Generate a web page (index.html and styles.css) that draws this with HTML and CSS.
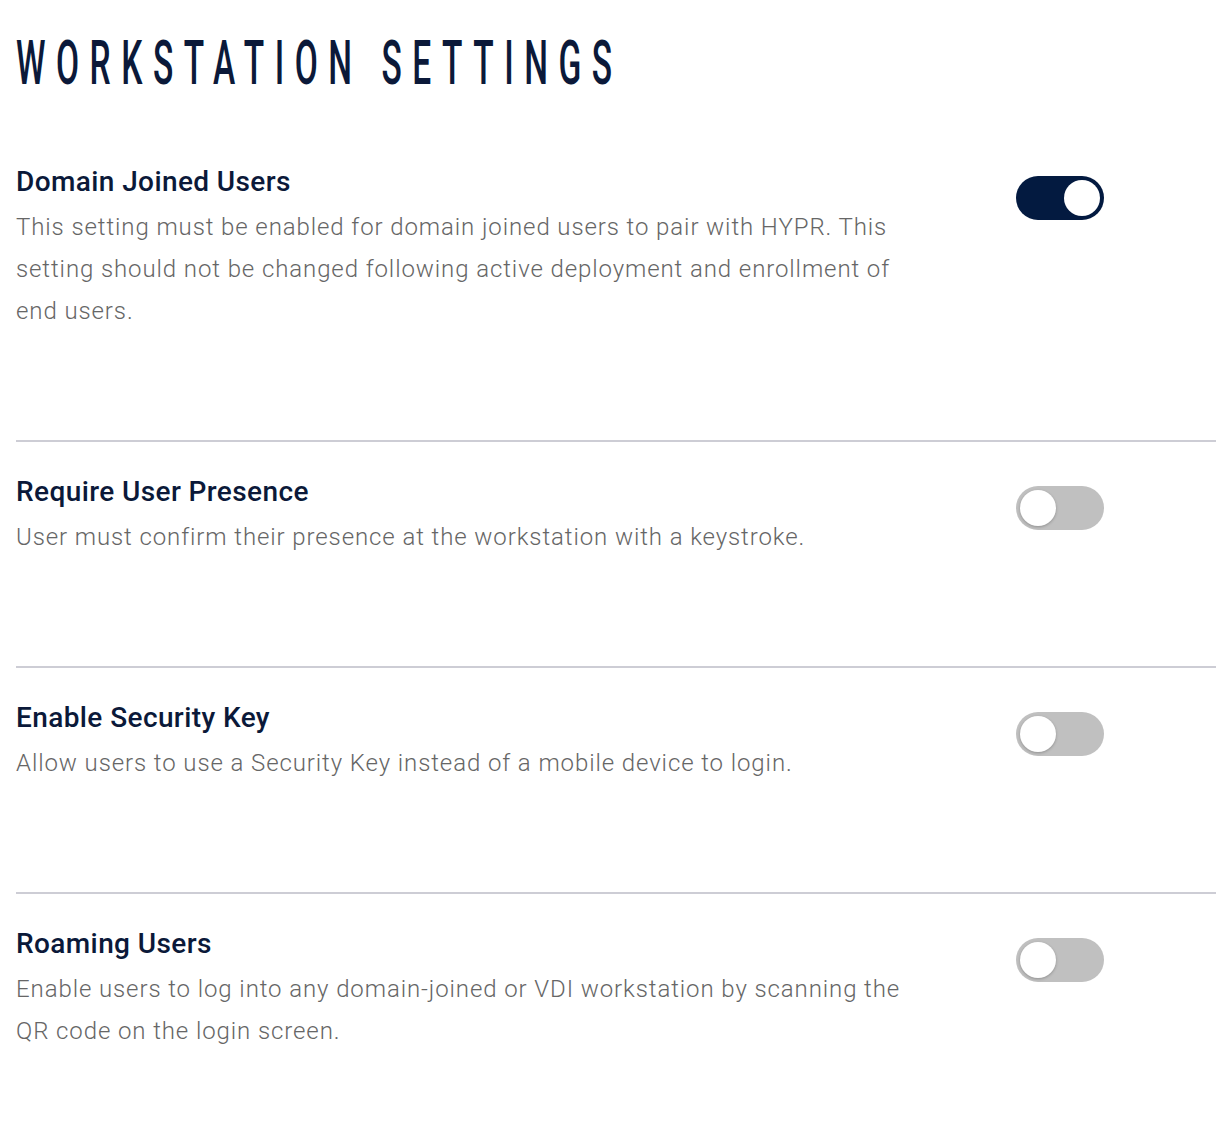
FILE: index.html
```html
<!DOCTYPE html>
<html lang="en">
<head>
<meta charset="utf-8">
<title>Workstation Settings</title>
<link rel="stylesheet" href="styles.css">
</head>
<body>
<main class="page">
  <h1 class="page-title">WORKSTATION SETTINGS</h1>

  <section class="setting">
    <div class="setting-text">
      <h2 class="setting-title">Domain Joined Users</h2>
      <p class="setting-desc">This setting must be enabled for domain joined users to pair with HYPR. This setting should not be changed following active deployment and enrollment of end users.</p>
    </div>
    <div class="toggle is-on" role="switch" aria-checked="true"><span class="knob"></span></div>
  </section>

  <section class="setting">
    <div class="setting-text">
      <h2 class="setting-title">Require User Presence</h2>
      <p class="setting-desc">User must confirm their presence at the workstation with a keystroke.</p>
    </div>
    <div class="toggle" role="switch" aria-checked="false"><span class="knob"></span></div>
  </section>

  <section class="setting">
    <div class="setting-text">
      <h2 class="setting-title">Enable Security Key</h2>
      <p class="setting-desc">Allow users to use a Security Key instead of a mobile device to login.</p>
    </div>
    <div class="toggle" role="switch" aria-checked="false"><span class="knob"></span></div>
  </section>

  <section class="setting">
    <div class="setting-text">
      <h2 class="setting-title">Roaming Users</h2>
      <p class="setting-desc">Enable users to log into any domain-joined or VDI workstation by scanning the QR code on the login screen.</p>
    </div>
    <div class="toggle" role="switch" aria-checked="false"><span class="knob"></span></div>
  </section>
</main>
</body>
</html>
```

FILE: styles.css
```css
html, body {
  margin: 0;
  padding: 0;
  background: #ffffff;
}

.page {
  padding: 0 16px;
  font-family: Roboto, "Noto Sans", sans-serif;
}

.page-title {
  margin: 27px 0 33px;
  height: 72px;
  font-family: Roboto, "Noto Sans", sans-serif;
  font-weight: 500;
  font-size: 62px;
  line-height: 72px;
  letter-spacing: 19.5px;
  color: #0b1939;
  white-space: nowrap;
  transform: scaleX(0.54);
  transform-origin: left center;
}

.setting {
  display: flex;
  align-items: flex-start;
  padding: 32px 0 108px;
  border-bottom: 2px solid #cdcdd5;
}

.setting:last-child {
  border-bottom: none;
}

.setting-text {
  width: 910px;
  flex: none;
}

.setting-title {
  margin: 0;
  font-size: 28px;
  line-height: 36px;
  font-weight: 500;
  letter-spacing: 0.4px;
  color: #0b1939;
}

.setting-desc {
  margin: 6px 0 0;
  font-size: 24px;
  line-height: 42px;
  font-weight: 300;
  letter-spacing: 0.9px;
  color: #666666;
}

.toggle {
  position: relative;
  flex: none;
  width: 88px;
  height: 44px;
  margin: 12px 0 0 90px;
  border-radius: 22px;
  background: #c0c0c0;
}

.toggle.is-on {
  background: #031a40;
}

.knob {
  position: absolute;
  top: 4px;
  left: 4px;
  width: 36px;
  height: 36px;
  border-radius: 50%;
  background: #ffffff;
  box-shadow: 0 1px 3px rgba(0, 0, 0, 0.25);
}

.toggle.is-on .knob {
  left: 48px;
  box-shadow: none;
}
```
